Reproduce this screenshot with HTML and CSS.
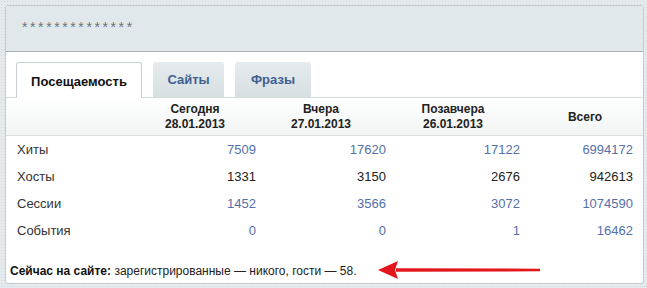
FILE: index.html
```html
<!DOCTYPE html>
<html lang="ru">
<head>
  <meta charset="UTF-8" />
  <title>Посещаемость</title>
  <link rel="stylesheet" href="styles.css">
</head>
<body>
  <div class="panel">
    <div class="panel-head">**************</div>

    <div class="tabs">
      <span class="tab active">Посещаемость</span>
      <span class="tab tab-sites">Сайты</span>
      <span class="tab tab-phrases">Фразы</span>
    </div>

    <table class="stats">
      <colgroup>
        <col class="w-label">
        <col class="w-c2">
        <col class="w-c3">
        <col class="w-c4">
        <col class="w-c5">
      </colgroup>
      <thead>
        <tr>
          <th class="label"></th>
          <th>Сегодня<br>28.01.2013</th>
          <th>Вчера<br>27.01.2013</th>
          <th>Позавчера<br>26.01.2013</th>
          <th class="total">Всего</th>
        </tr>
      </thead>
      <tbody>
        <tr class="link">
          <td class="label">Хиты</td>
          <td>7509</td><td>17620</td><td>17122</td><td>6994172</td>
        </tr>
        <tr>
          <td class="label">Хосты</td>
          <td>1331</td><td>3150</td><td>2676</td><td>942613</td>
        </tr>
        <tr class="link">
          <td class="label">Сессии</td>
          <td>1452</td><td>3566</td><td>3072</td><td>1074590</td>
        </tr>
        <tr class="link">
          <td class="label">События</td>
          <td>0</td><td>0</td><td>1</td><td>16462</td>
        </tr>
      </tbody>
    </table>

    <div class="online">
      <b>Сейчас на сайте:</b> зарегистрированные — никого, гости — 58.
      <svg class="arrow" width="164" height="20" viewBox="0 0 164 20">
        <path d="M18 8.2 L162 8.7 L162 11.3 L18 11.8 Z" fill="#e3161b"/>
        <path d="M0 10 L20 1 L17 10 L20 19 Z" fill="#e3161b"/>
      </svg>
    </div>
  </div>
</body>
</html>
```

FILE: styles.css
```css
body {
  margin: 0;
  padding: 5px 3px 4px 5px;
  font-family: Arial, "Liberation Sans", sans-serif;
  font-size: 13px;
  color: #222;
  background-color: #e4eaed;
  background-image: radial-gradient(#d2dade 0.8px, transparent 1px);
  background-size: 3px 3px;
}

.panel {
  position: relative;
  height: 277px;
  background: #fff;
  border: 1px solid #c4ccd0;
  border-radius: 3px;
  overflow: hidden;
}

.panel-head {
  height: 45px;
  background: #e1e8eb;
  border-bottom: 1px solid #a9b1b4;
  padding-left: 16px;
  line-height: 43px;
  font-size: 14px;
  letter-spacing: 2.6px;
  color: #6e7478;
}

.tabs {
  display: flex;
  gap: 11px;
  padding: 10px 0 0 10px;
  height: 35px;
  border-bottom: 1px solid #d5dadc;
}

.tab {
  display: flex;
  align-items: center;
  justify-content: center;
  height: 35px;
  box-sizing: border-box;
  font-weight: bold;
  color: #41608f;
  background: linear-gradient(#e5ebee, #d7dfe2);
  border-radius: 3px 3px 0 0;
}

.tab.active {
  width: 126px;
  height: 36px;
  margin-bottom: -1px;
  color: #111;
  background: #fff;
  border: 1px solid #c8cfd2;
  border-bottom: none;
  padding-top: 1px;
}

.tab-sites { width: 71px; }
.tab-phrases { width: 76px; }

.stats {
  width: 637px;
  table-layout: fixed;
  border-collapse: collapse;
}

.w-label { width: 138px; }
.w-c2 { width: 122px; }
.w-c3 { width: 130px; }
.w-c4 { width: 134px; }
.w-c5 { width: 113px; }

.stats th {
  height: 36px;
  font-size: 12px;
  font-weight: bold;
  line-height: 15px;
  color: #222;
  text-align: center;
  padding: 1px 20px 0 0;
  background: linear-gradient(#ffffff, #f2f4f4);
  border-bottom: 1px solid #dadfe1;
}

.stats th.label { padding: 0; }
.stats th.total { padding-right: 3px; }

.stats td {
  height: 27px;
  padding: 0 10px 0 0;
  text-align: right;
  color: #222;
}

.stats td.label {
  padding-left: 11px;
  text-align: left;
  color: #333;
}

.stats tr.link td { color: #5470a8; }
.stats tr.link td.label { color: #333; }

.online {
  position: relative;
  margin-top: 20px;
  padding-left: 4px;
  font-size: 12px;
  color: #222;
}

.online b { color: #111; }

.arrow {
  position: absolute;
  left: 372px;
  top: -4px;
}
```
